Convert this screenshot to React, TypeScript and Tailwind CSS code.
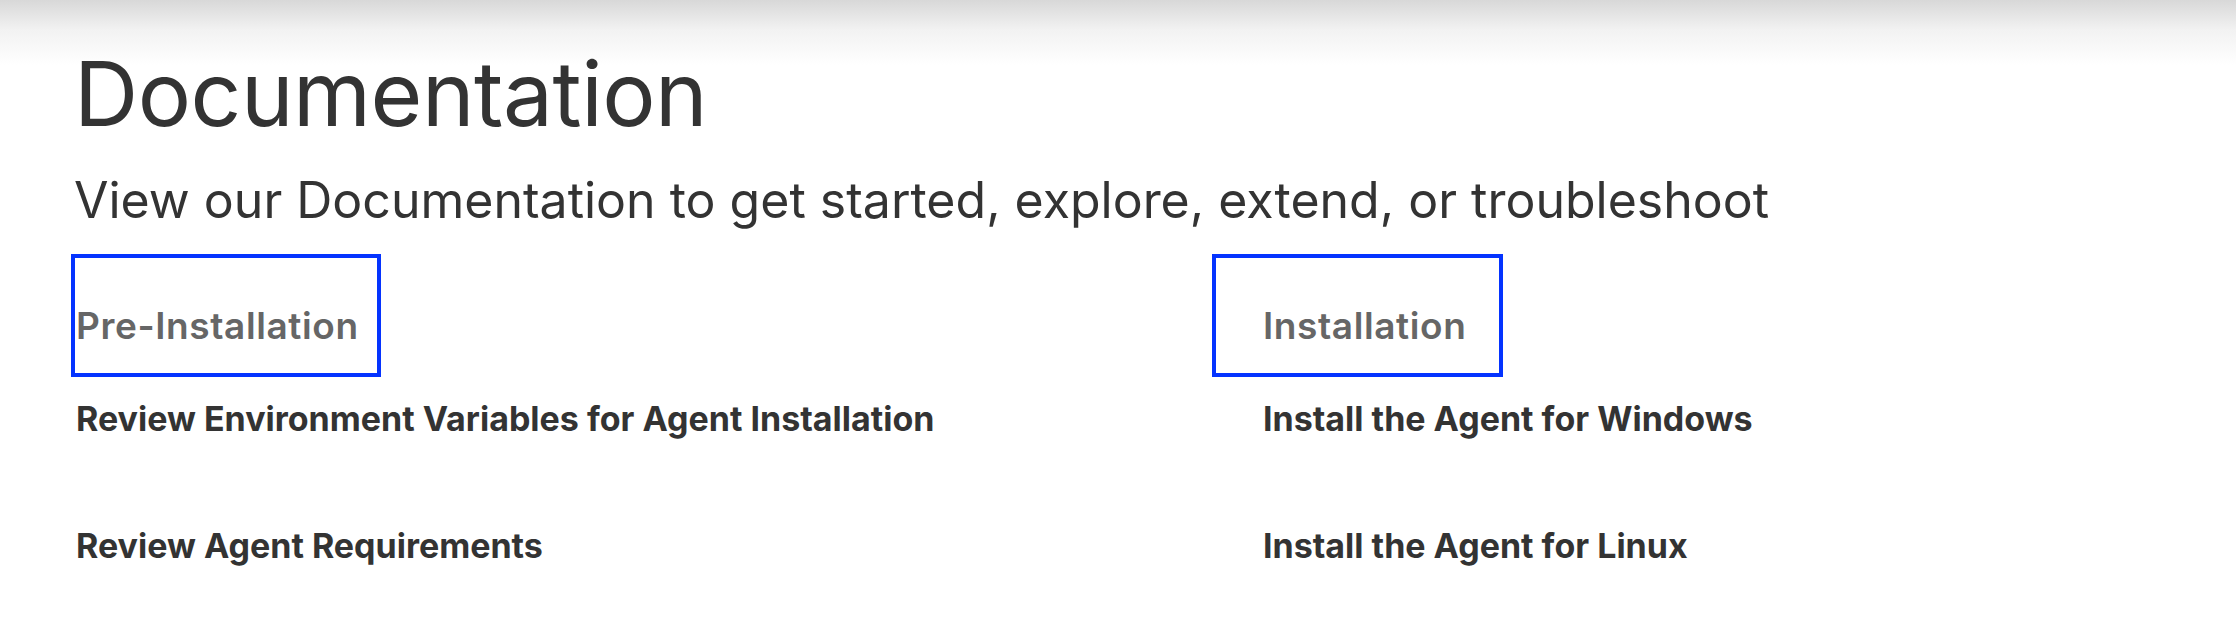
import React from "react";

interface DocSection {
  title: string;
  links: string[];
}

const sections: DocSection[] = [
  {
    title: "Pre-Installation",
    links: ["Review Environment Variables for Agent Installation", "Review Agent Requirements"],
  },
  {
    title: "Installation",
    links: ["Install the Agent for Windows", "Install the Agent for Linux"],
  },
];

export default function App() {
  return (
    <div className="min-h-[626px] w-full bg-[linear-gradient(to_bottom,#d8d8d8_0px,#f2f2f2_30px,#ffffff_65px)] font-['Inter',sans-serif] text-[#333333]">
      <div className="pl-[71px] pt-[40px]">
        {/* Page heading */}
        <h1 className="pl-[3px] text-[89px] font-normal leading-[108px] tracking-[-0.5px]">Documentation</h1>
        <p className="mt-[22px] pl-[3px] text-[50px] leading-[60px]">
          View our Documentation to get started, explore, extend, or troubleshoot
        </p>

        {/* Sections */}
        <div className="mt-[24px] grid grid-cols-[1141px_1fr]">
          {sections.map((s, idx) => (
            <div key={s.title} className="flex flex-col">
              <div className="self-start border-4 border-[#0433ff]">
                <h2
                  className={`pt-[44px] pb-[23px] text-[37px] font-semibold leading-[48px] tracking-[0.6px] text-[#666666] ${
                    idx === 0 ? "pl-[1px] pr-[18px]" : "pl-[47px] pr-[33px]"
                  }`}
                >
                  {s.title}
                </h2>
              </div>
              <ul className={`mt-[22px] flex flex-col gap-[87px] ${idx === 0 ? "pl-[5px]" : "pl-[51px]"}`}>
                {s.links.map((l) => (
                  <li key={l}>
                    <a href="#" className="text-[34px] font-bold leading-[40px] text-[#333333]">
                      {l}
                    </a>
                  </li>
                ))}
              </ul>
            </div>
          ))}
        </div>
      </div>
    </div>
  );
}
